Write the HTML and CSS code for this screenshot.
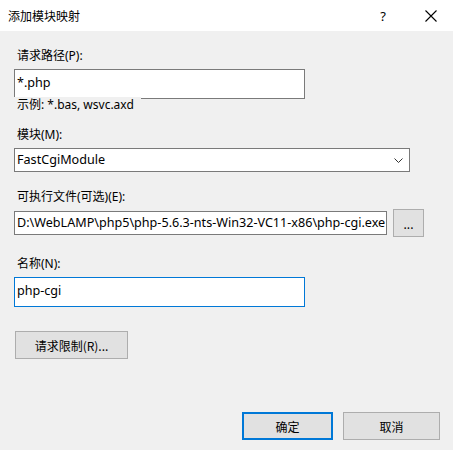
FILE: index.html
```html
<!DOCTYPE html>
<html>
<head>
<meta charset="utf-8">
<link rel="stylesheet" href="styles.css">
</head>
<body>
<div class="win">
  <div class="titlebar">
    <span class="title">添加模块映射</span>
    <span class="help">?</span>
    <span class="close"><svg width="12" height="12" viewBox="0 0 12 12"><path d="M0.5 0.5 L11.5 11.5 M11.5 0.5 L0.5 11.5" stroke="#000" stroke-width="1.1" fill="none"/></svg></span>
  </div>
  <div class="content">
    <div class="label l1">请求路径(P):</div>
    <div class="box tall w290"><span class="val">*.php</span></div>
    <div class="hint">示例: *.bas, wsvc.axd</div>
    <div class="label l2">模块(M):</div>
    <div class="box select"><span class="val">FastCgiModule</span>
      <svg class="chev" width="9" height="5" viewBox="0 0 9 5"><path d="M0.5 0.5 L4.5 4.5 L8.5 0.5" stroke="#333" stroke-width="1" fill="none"/></svg>
    </div>
    <div class="label l3">可执行文件(可选)(E):</div>
    <div class="row">
      <div class="box exe"><span class="val">D:\WebLAMP\php5\php-5.6.3-nts-Win32-VC11-x86\php-cgi.exe</span></div>
      <div class="btn browse">...</div>
    </div>
    <div class="label l4">名称(N):</div>
    <div class="box tall w290 focus"><span class="val">php-cgi</span></div>
    <div class="btn limit">请求限制(R)...</div>
    <div class="footer">
      <div class="btn ok">确定</div>
      <div class="btn cancel">取消</div>
    </div>
  </div>
</div>
</body>
</html>
```
FILE: styles.css
```css
* { box-sizing: border-box; }
html, body { margin: 0; padding: 0; }
body {
  width: 453px; height: 450px; overflow: hidden;
  background: #f0f0f0;
  font-family: "Noto Sans", "Noto Sans CJK SC", sans-serif;
  font-size: 12px; color: #000;
}
.win { width: 453px; height: 450px; display: flex; flex-direction: column; }
.titlebar {
  height: 31px; background: #fff; display: flex; align-items: center;
  padding-left: 8px; flex-shrink: 0;
}
.title { font-family: "Noto Sans CJK SC", sans-serif; font-size: 12px; color: #000; flex: 1; }
.help { width: 12px; margin-right: 36px; font-size: 13px; text-align: center; }
.close { width: 12px; height: 12px; margin-right: 16px; display: flex; }
.content { display: flex; flex-direction: column; align-items: flex-start; padding-left: 14px; }
.label { height: 16px; line-height: 16px; padding-left: 3px; }
.l1 { margin-top: 17px; }
.l2 { margin-top: 14px; }
.l3 { margin-top: 17px; }
.l4 { margin-top: 19px; }
.box { background: #fff; border: 1px solid #7a7a7a; position: relative; }
.val { display: block; padding-left: 2px; line-height: 16px; white-space: nowrap; font-size: 12.6px; }
.tall { height: 30px; margin-top: 5px; }
.tall .val { padding-top: 5px; }
.w290 { width: 291px; }
.focus { border-color: #0078d7; }
.hint {
  margin-top: -2px; height: 16px; line-height: 16px; padding-left: 3px; padding-right: 2px;
  background: #f0f0f0; position: relative; width: 127px;
}
.select { width: 396px; height: 24px; margin-top: 5px; display: flex; align-items: center; }
.chev { position: absolute; right: 6px; top: 9px; }
.row { display: flex; align-items: center; margin-top: 4px; }
.exe { width: 373px; height: 24px; display: flex; align-items: center; overflow: hidden; }
.btn {
  background: #e1e1e1; border: 1px solid #adadad; display: flex;
  align-items: center; justify-content: center;
  font-family: "Noto Sans CJK SC", sans-serif;
}
.browse { width: 31px; height: 28px; margin-left: 6px; }
.limit { width: 113px; height: 28px; margin-top: 24px; margin-left: 1px; }
.footer { display: flex; margin-top: 53px; margin-left: 228px; gap: 10px; }
.ok { width: 91px; height: 28px; border: 2px solid #0078d7; }
.cancel { width: 97px; height: 28px; }
```
